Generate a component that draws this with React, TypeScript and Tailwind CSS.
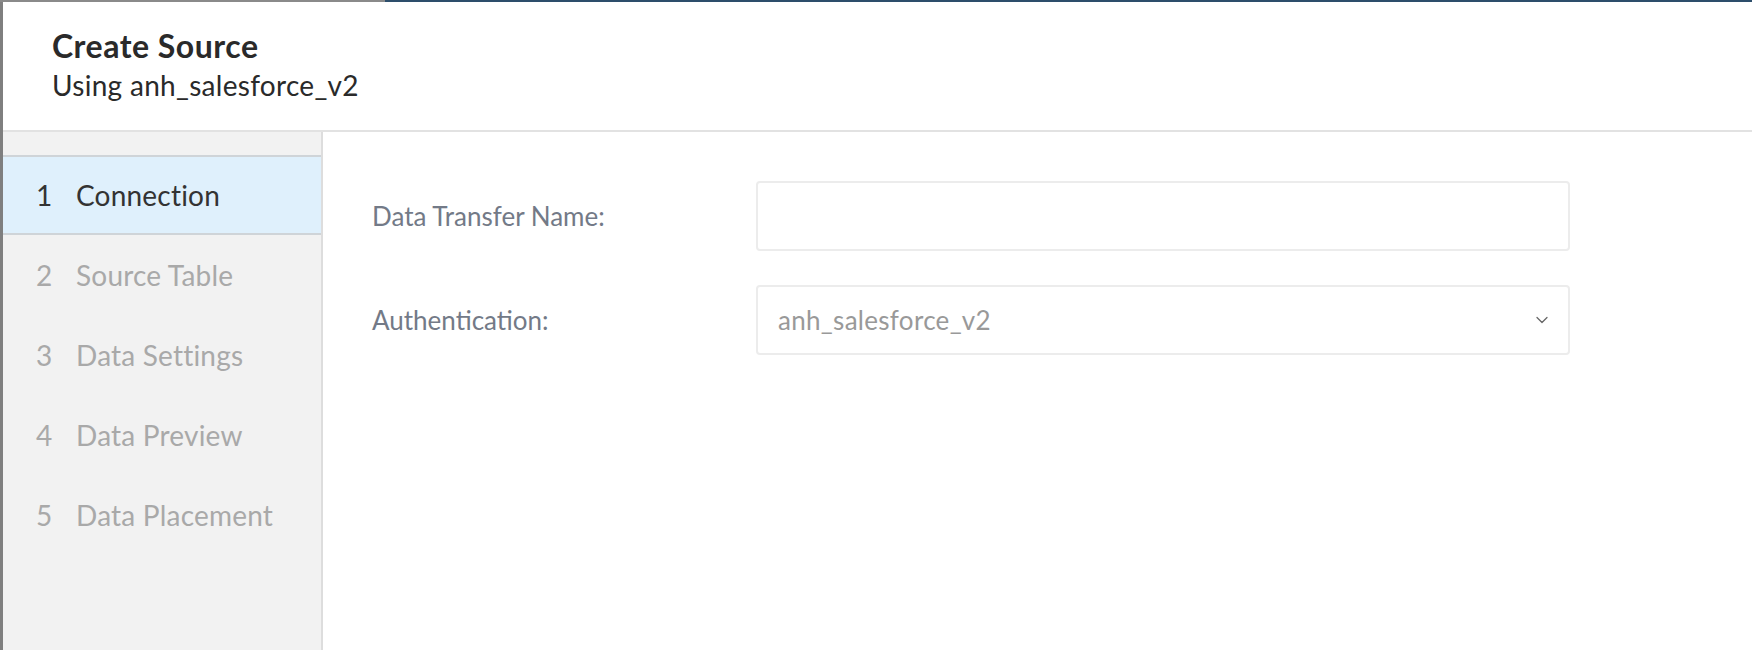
import { ChevronDown } from 'lucide-react';

const steps = ['Connection', 'Source Table', 'Data Settings', 'Data Preview', 'Data Placement'];

export default function App() {
  return (
    <div className="flex h-[650px] w-full flex-col overflow-hidden bg-[#858585] font-['Lato',sans-serif]">
      {/* backdrop strip */}
      <div className="flex h-[2px] shrink-0">
        <div className="w-[385px] bg-[#8a8a8a]" />
        <div className="flex-1 bg-[#2d4e6b]" />
      </div>

      <div className="flex min-h-0 flex-1">
        <div className="w-[3px] shrink-0 bg-[#7f7f7f]" />

        {/* Modal */}
        <div className="flex min-w-0 flex-1 flex-col bg-white">
          <div className="h-[130px] shrink-0 border-b-2 border-[#e2e2e2] pl-[49px] pt-[25px]">
            <h1 className="text-[32px] font-bold leading-[38px] tracking-[0.5px] text-[#2a2a2a]">Create Source</h1>
            <p className="text-[28px] leading-[40px] tracking-[0.3px] text-[#2a2a2a]">Using anh_salesforce_v2</p>
          </div>

          <div className="flex min-h-0 flex-1">
            {/* Steps */}
            <div className="w-[320px] shrink-0 border-r-2 border-[#dddddd] bg-[#f2f2f2] pt-[23px]">
              {steps.map((step, i) => (
                <div
                  key={step}
                  className={
                    i === 0
                      ? 'flex h-[80px] items-center border-y-2 border-[#cfd4d8] bg-[#dff0fc] pl-[33px] text-[#333333]'
                      : 'flex h-[80px] items-center pl-[33px] text-[#a9a9a9]'
                  }
                >
                  <span className="w-[40px] text-[28px]">{i + 1}</span>
                  <span className="text-[28px] tracking-[0.2px]">{step}</span>
                </div>
              ))}
            </div>

            {/* Form */}
            <div className="flex-1 pl-[49px] pt-[49px]">
              <div className="flex flex-col gap-[34px]">
                <div className="flex items-center">
                  <label className="w-[384px] shrink-0 text-[26px] text-[#737a87]">Data Transfer Name:</label>
                  <input className="h-[70px] w-[814px] rounded-[4px] border-2 border-[#ececec] bg-white px-[20px] text-[26px] outline-none" />
                </div>
                <div className="flex items-center">
                  <label className="w-[384px] shrink-0 text-[26px] text-[#737a87]">Authentication:</label>
                  <div className="flex h-[70px] w-[814px] items-center justify-between rounded-[4px] border-2 border-[#ececec] bg-white pl-[20px] pr-[16px]">
                    <span className="text-[26px] tracking-[0.3px] text-[#999999]">anh_salesforce_v2</span>
                    <ChevronDown className="h-[20px] w-[20px] text-[#666666]" strokeWidth={1.5} />
                  </div>
                </div>
              </div>
            </div>
          </div>
        </div>
      </div>
    </div>
  );
}
